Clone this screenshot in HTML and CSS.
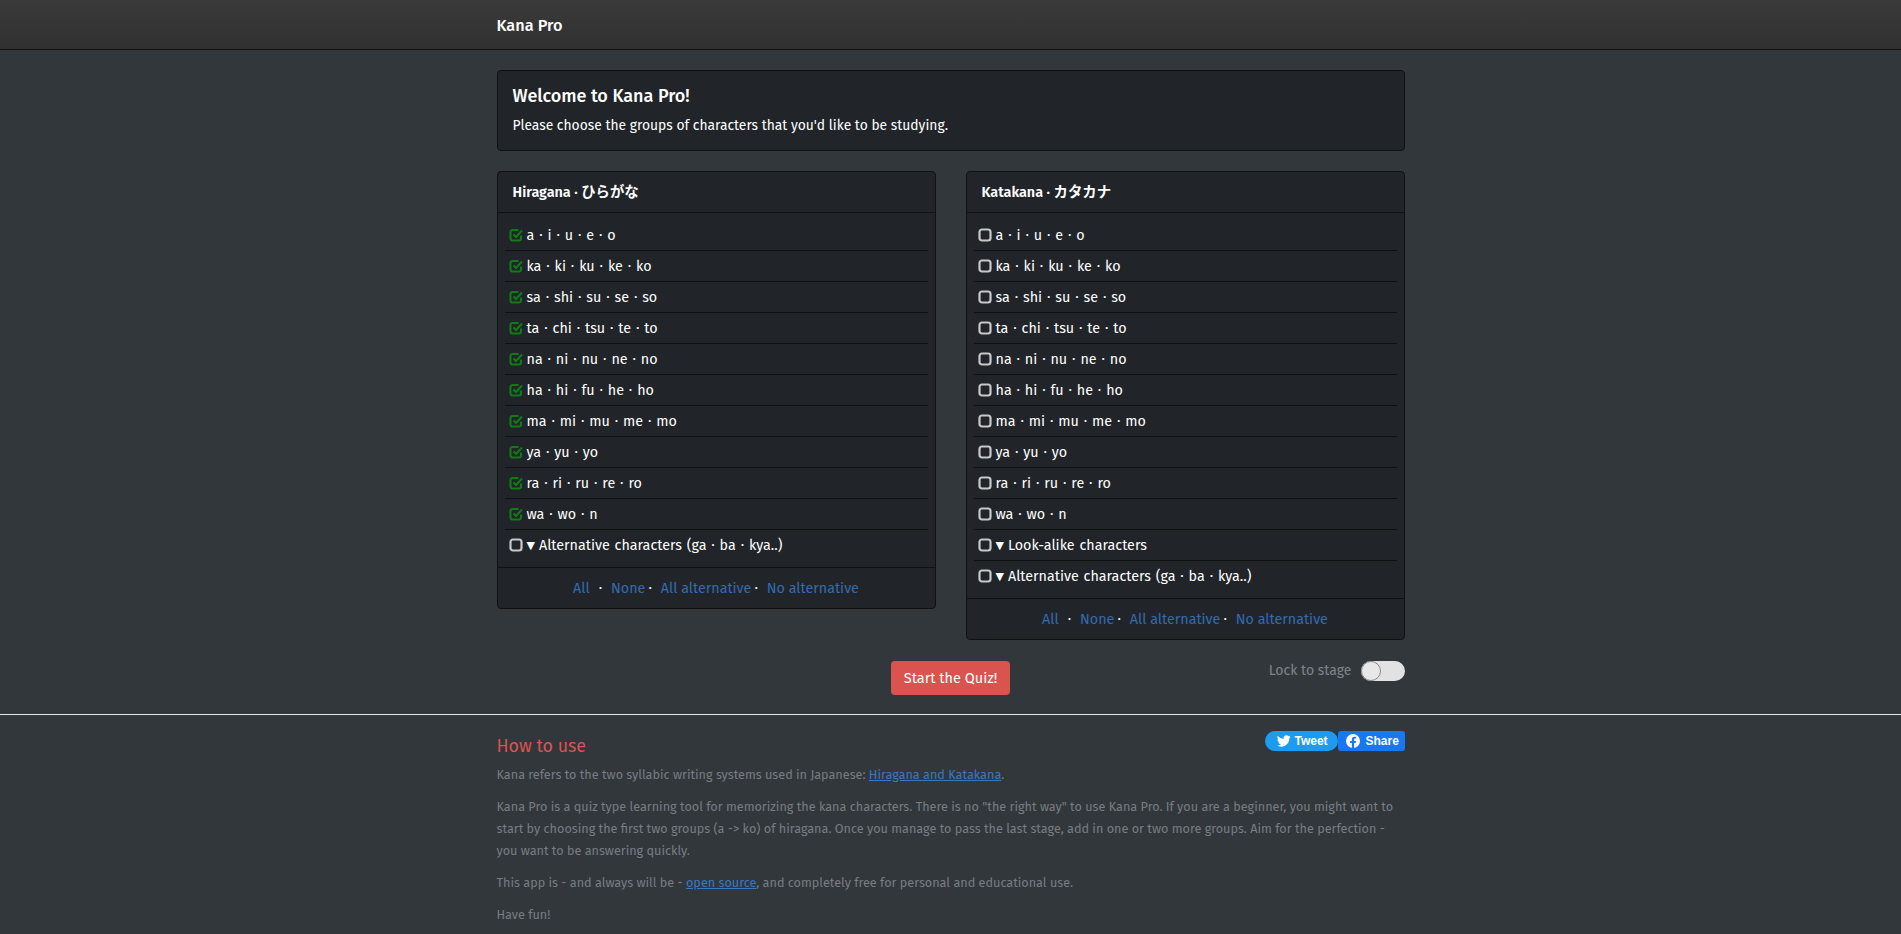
FILE: index.html
```html
<!DOCTYPE html>
<html lang="en">
<head>
<meta charset="utf-8">
<title>Kana Pro</title>
<link rel="stylesheet" href="styles.css">
</head>
<body>
<header class="navbar"><div class="wrap"><span class="brand">Kana Pro</span></div></header>
<main class="wrap main">
  <section class="welcome">
    <h1>Welcome to Kana Pro!</h1>
    <p>Please choose the groups of characters that you'd like to be studying.</p>
  </section>
  <div class="columns">
    <section class="panel">
      <h2 class="panel-head">Hiragana · ひらがな</h2>
      <ul class="rows">
        <li><svg class="cb on" viewBox="0 0 14 14"><use href="#tick"/></svg>a · i · u · e · o</li>
        <li><svg class="cb on" viewBox="0 0 14 14"><use href="#tick"/></svg>ka · ki · ku · ke · ko</li>
        <li><svg class="cb on" viewBox="0 0 14 14"><use href="#tick"/></svg>sa · shi · su · se · so</li>
        <li><svg class="cb on" viewBox="0 0 14 14"><use href="#tick"/></svg>ta · chi · tsu · te · to</li>
        <li><svg class="cb on" viewBox="0 0 14 14"><use href="#tick"/></svg>na · ni · nu · ne · no</li>
        <li><svg class="cb on" viewBox="0 0 14 14"><use href="#tick"/></svg>ha · hi · fu · he · ho</li>
        <li><svg class="cb on" viewBox="0 0 14 14"><use href="#tick"/></svg>ma · mi · mu · me · mo</li>
        <li><svg class="cb on" viewBox="0 0 14 14"><use href="#tick"/></svg>ya · yu · yo</li>
        <li><svg class="cb on" viewBox="0 0 14 14"><use href="#tick"/></svg>ra · ri · ru · re · ro</li>
        <li><svg class="cb on" viewBox="0 0 14 14"><use href="#tick"/></svg>wa · wo · n</li>
        <li><svg class="cb" viewBox="0 0 14 14"><use href="#box"/></svg><span class="tri">▼</span>Alternative characters (ga · ba · kya..)</li>
      </ul>
      <div class="panel-foot"><a>All</a><span class="dot wide">·</span><a>None</a><span class="dot">·</span><a>All alternative</a><span class="dot">·</span><a>No alternative</a></div>
    </section>
    <section class="panel">
      <h2 class="panel-head">Katakana · カタカナ</h2>
      <ul class="rows">
        <li><svg class="cb" viewBox="0 0 14 14"><use href="#box"/></svg>a · i · u · e · o</li>
        <li><svg class="cb" viewBox="0 0 14 14"><use href="#box"/></svg>ka · ki · ku · ke · ko</li>
        <li><svg class="cb" viewBox="0 0 14 14"><use href="#box"/></svg>sa · shi · su · se · so</li>
        <li><svg class="cb" viewBox="0 0 14 14"><use href="#box"/></svg>ta · chi · tsu · te · to</li>
        <li><svg class="cb" viewBox="0 0 14 14"><use href="#box"/></svg>na · ni · nu · ne · no</li>
        <li><svg class="cb" viewBox="0 0 14 14"><use href="#box"/></svg>ha · hi · fu · he · ho</li>
        <li><svg class="cb" viewBox="0 0 14 14"><use href="#box"/></svg>ma · mi · mu · me · mo</li>
        <li><svg class="cb" viewBox="0 0 14 14"><use href="#box"/></svg>ya · yu · yo</li>
        <li><svg class="cb" viewBox="0 0 14 14"><use href="#box"/></svg>ra · ri · ru · re · ro</li>
        <li><svg class="cb" viewBox="0 0 14 14"><use href="#box"/></svg>wa · wo · n</li>
        <li><svg class="cb" viewBox="0 0 14 14"><use href="#box"/></svg><span class="tri">▼</span>Look-alike characters</li>
        <li><svg class="cb" viewBox="0 0 14 14"><use href="#box"/></svg><span class="tri">▼</span>Alternative characters (ga · ba · kya..)</li>
      </ul>
      <div class="panel-foot"><a>All</a><span class="dot wide">·</span><a>None</a><span class="dot">·</span><a>All alternative</a><span class="dot">·</span><a>No alternative</a></div>
    </section>
  </div>
  <div class="actions">
    <button class="start">Start the Quiz!</button>
    <div class="lock"><span>Lock to stage</span><span class="switch"></span></div>
  </div>
</main>
<hr class="rule">
<section class="wrap about">
  <div class="about-top">
    <h3>How to use</h3>
    <div class="social">
      <span class="tweet"><svg viewBox="0 0 24 24"><path fill="#fff" d="M23.6 4.6c-.9.4-1.8.7-2.8.8 1-.6 1.8-1.5 2.1-2.7-.9.6-2 1-3.1 1.2C18.900 2.900 17.600 2.300 16.200 2.300c-2.700 0-4.900 2.200-4.900 4.900 0 .4 0 .8.1 1.100C7.300 8.100 3.700 6.100 1.300 3.100c-.4.700-.7 1.600-.7 2.500 0 1.700.9 3.200 2.200 4.100-.8 0-1.600-.2-2.200-.6v.1c0 2.400 1.700 4.400 3.900 4.800-.4.100-.8.200-1.300.2-.3 0-.6 0-.9-.1.600 2 2.400 3.400 4.600 3.400-1.700 1.300-3.800 2.100-6.100 2.100-.4 0-.8 0-1.200-.1 2.200 1.400 4.800 2.200 7.500 2.200 9.100 0 14-7.500 14-14v-.6c1-.7 1.800-1.600 2.400-2.500z"/></svg>Tweet</span>
      <span class="share"><svg viewBox="0 0 24 24"><circle cx="12" cy="12" r="12" fill="#fff"/><path fill="#1877f2" d="M16.700 15.500l.5-3.500h-3.300V9.800c0-1 .5-1.900 1.900-1.900h1.500v-3s-1.400-.2-2.700-.2c-2.700 0-4.500 1.600-4.500 4.600V12H7v3.500h3.100V24h3.800v-8.500z"/></svg>Share</span>
    </div>
  </div>
  <p>Kana refers to the two syllabic writing systems used in Japanese: <a>Hiragana and Katakana</a>.</p>
  <p>Kana Pro is a quiz type learning tool for memorizing the kana characters. There is no "the right way" to use Kana Pro. If you are a beginner, you might want to start by choosing the first two groups (a -&gt; ko) of hiragana. Once you manage to pass the last stage, add in one or two more groups. Aim for the perfection - you want to be answering quickly.</p>
  <p>This app is - and always will be - <a>open source</a>, and completely free for personal and educational use.</p>
  <p>Have fun!</p>
</section>
<svg class="defs" width="0" height="0" aria-hidden="true">
  <symbol id="box" viewBox="0 0 14 14"><rect x="1.500" y="1.500" width="11" height="11" rx="2.500" fill="none" stroke="#c8c8c8" stroke-width="2.200"/></symbol>
  <symbol id="tick" viewBox="0 0 14 14"><path d="M12 7.500v3a2 2 0 0 1-2 2H3.500a2 2 0 0 1-2-2V4a2 2 0 0 1 2-2h6" fill="none" stroke="#0f7a16" stroke-width="2.100"/><path d="M4.500 6.500l2.500 2.500 6-6.500" fill="none" stroke="#0f7a16" stroke-width="2.200"/></symbol>
</svg>
</body>
</html>
```
FILE: styles.css
```css
html, body { margin: 0; padding: 0; }
body {
  background: #32373c;
  color: #fff;
  font-family: "Fira Sans", "Noto Sans", "Liberation Sans", "Noto Sans CJK JP", sans-serif;
  font-size: 14px;
  line-height: 20px;
  height: 934px;
  overflow: hidden;
}
.wrap { width: 908px; margin: 0 auto; box-sizing: border-box; }
.navbar {
  height: 50px;
  box-sizing: border-box;
  background: linear-gradient(#3a3a3a, #303030);
  border-bottom: 1px solid #111;
}
.navbar .wrap { height: 49px; display: flex; align-items: center; padding-top: 3px; }
.brand { font-size: 16.300px; font-weight: 500; }
.main { padding-top: 20px; }
.welcome {
  height: 81px;
  box-sizing: border-box;
  background: #212529;
  border: 1px solid #111;
  border-radius: 4px;
  padding: 13px 15px;
}
.welcome h1 { margin: 0; font-size: 18px; line-height: 24px; font-weight: 500; }
.welcome p { margin: 8px 0 0; font-size: 13.850px; }
.columns { display: flex; justify-content: space-between; align-items: flex-start; margin-top: 20px; }
.panel {
  width: 439px;
  box-sizing: border-box;
  background: #212529;
  border: 1px solid #111;
  border-radius: 4px;
}
.panel-head {
  margin: 0;
  height: 41px;
  box-sizing: border-box;
  padding: 11px 15px 9px;
  font-size: 14.400px;
  font-weight: 600;
  border-bottom: 1px solid #111;
}
.rows { list-style: none; margin: 0; padding: 7px; }
.rows li {
  height: 31px;
  box-sizing: border-box;
  border-bottom: 1px solid #111;
  display: flex;
  align-items: center;
  padding-left: 4px;
  padding-top: 2px;
  font-size: 14.300px;
  word-spacing: 1.100px;
  white-space: pre;
}
.rows li:last-child { height: 30px; border-bottom: 0; }
.cb { width: 14px; height: 14px; margin: -2px 4px 0 0; flex: none; }
.tri { font-family: "DejaVu Sans", sans-serif; font-size: 11px; margin: 0 4px 0 0; }
.panel-foot {
  border-top: 1px solid #111;
  height: 41px;
  box-sizing: border-box;
  display: flex;
  justify-content: center;
  align-items: center;
  font-size: 14.300px;
  padding-top: 2px;
}
.panel-foot a { color: #336bb0; }
.dot { margin: 0 9px 0 3px; }
.dot.wide { margin: 0 9px; }
.actions { position: relative; display: flex; justify-content: center; margin-top: 21px; height: 53px; }
.start {
  width: 119px;
  height: 34px;
  background: #d9534f;
  color: #fff;
  border: 0;
  border-radius: 4px;
  font: inherit;
  font-size: 14.500px;
}
.lock { position: absolute; right: 0; top: 0; display: flex; align-items: center; gap: 9px; color: #7f8489; height: 20px; }
.switch {
  width: 44px;
  height: 20px;
  border-radius: 10px;
  background: #e2e2e2;
  position: relative;
}
.switch::before {
  content: "";
  position: absolute;
  left: 0;
  top: 0;
  width: 20px;
  height: 20px;
  box-sizing: border-box;
  border: 1px solid #888;
  border-radius: 50%;
  background: #e8e8e8;
}
.rule { margin: 0; border: 0; height: 1px; background: #e6e6e6; }
.about { padding-top: 16px; color: #777d82; position: relative; font-size: 12.650px; }
.about-top { display: flex; justify-content: space-between; align-items: flex-start; margin-bottom: 3px; }
.about h3 { margin: 0; color: #d9534f; font-size: 17.800px; line-height: 30px; font-weight: 400; }
.social { display: flex; font-family: "Liberation Sans", sans-serif; font-weight: 700; font-size: 12px; color: #fff; }
.social svg { width: 14px; height: 14px; }
.tweet, .share { display: flex; align-items: center; height: 20px; gap: 4px; }
.tweet { width: 73px; background: #1d9bf0; border-radius: 10px; padding-left: 12px; box-sizing: border-box; }
.share { width: 67px; background: #1877f2; border-radius: 3px; padding-left: 8px; box-sizing: border-box; gap: 6px; }
.about p { margin: 0 0 10px; line-height: 22px; }
.about a { color: #3a78c2; text-decoration: underline; }
.defs { position: absolute; }
```
